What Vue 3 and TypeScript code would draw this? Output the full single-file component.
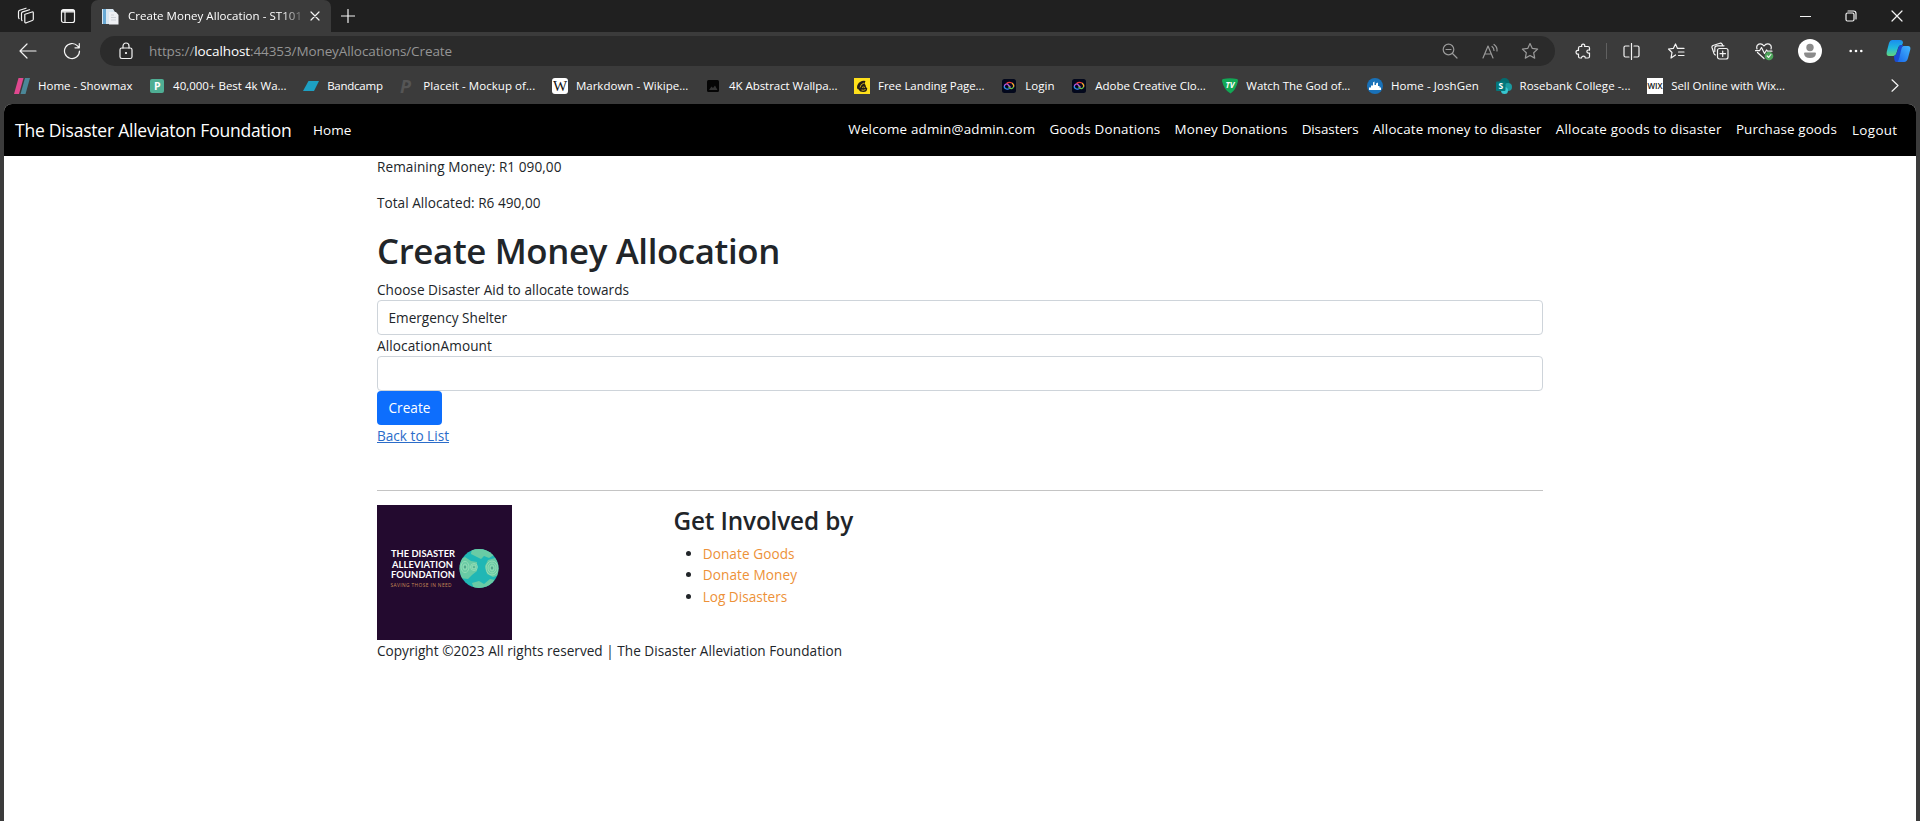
<script setup lang="ts">
import type { Directive } from 'vue'

interface Label {
  text: string
  width: number
}
interface Bookmark extends Label {
  icon: string
}

// Spreads letters so a label fills its intended width whichever font is present.
const vFit: Directive<HTMLElement, number> = {
  mounted(el, { value }) {
    const natural = el.getBoundingClientRect().width
    const count = (el.textContent ?? '').trim().length
    if (count > 0) el.style.letterSpacing = `${(value - natural) / count}px`
  },
}

const bookmarks: Bookmark[] = [
  { icon: 'showmax', text: 'Home - Showmax', width: 94.5 },
  { icon: 'pexels', text: '40,000+ Best 4k Wa...', width: 113.5 },
  { icon: 'bandcamp', text: 'Bandcamp', width: 55.5 },
  { icon: 'placeit', text: 'Placeit - Mockup of...', width: 112 },
  { icon: 'wiki', text: 'Markdown - Wikipe...', width: 112.5 },
  { icon: 'wall', text: '4K Abstract Wallpa...', width: 108.5 },
  { icon: 'chimp', text: 'Free Landing Page...', width: 106.5 },
  { icon: 'adobe', text: 'Login', width: 29.5 },
  { icon: 'adobe', text: 'Adobe Creative Clo...', width: 110.5 },
  { icon: 'tv', text: 'Watch The God of...', width: 104 },
  { icon: 'josh', text: 'Home - JoshGen', width: 88 },
  { icon: 'share', text: 'Rosebank College -...', width: 111 },
  { icon: 'wix', text: 'Sell Online with Wix...', width: 114 },
]

const navLinks: Label[] = [
  { text: 'Welcome admin@admin.com', width: 187 },
  { text: 'Goods Donations', width: 111 },
  { text: 'Money Donations', width: 113 },
  { text: 'Disasters', width: 57 },
  { text: 'Allocate money to disaster', width: 169 },
  { text: 'Allocate goods to disaster', width: 166 },
  { text: 'Purchase goods', width: 101 },
]

const involve: Label[] = [
  { text: 'Donate Goods', width: 92 },
  { text: 'Donate Money', width: 94.5 },
  { text: 'Log Disasters', width: 84.5 },
]
</script>

<template>
  <div class="window">
    <header class="titlebar">
      <span class="cell workspace">
        <svg width="18" height="18" viewBox="0 0 18 18" class="line">
          <path d="M8 7.2 15 5q1.300-.3 1.300 1v6.300q0 .9-1 1.200L9.300 15.800Q7.800 16.200 7.800 15V8.200Q7.500 7.500 8 7.200Z" />
          <path d="M5 13.500Q4.500 13 4.500 12.500V6.500Q4.500 5.300 5.700 4.900L12.500 2.700" />
          <path d="M2 11.500Q1.500 11 1.500 10V4.800Q1.500 3.600 2.700 3.200L9 1.200" />
        </svg>
      </span>
      <span class="cell actions">
        <svg width="16" height="16" viewBox="0 0 16 16" class="line">
          <rect x="1.500" y="1.500" width="13" height="13" rx="2" /><path d="M1.500 4H14.500M5 4V14" /><path d="M2.500 2.700H13.500" stroke-width="2" />
        </svg>
      </span>
      <div class="tab">
        <svg width="17" height="17" viewBox="0 0 17 17">
          <path d="M0 1h11l2 3v12H0z" fill="#d9e6f0" /><path d="M1 1h3v15H1z" fill="#69a9d4" /><path d="M7 4h7l2.500 3v9.500H7z" fill="#eef0f3" />
          <path d="M9 7h3M9 9.500h5M9 12h5" stroke="#cdd2d8" />
        </svg>
        <div class="tab-title"><span v-fit="174" class="fit">Create Money Allocation - ST101</span></div>
        <svg width="10" height="10" viewBox="0 0 10 10" class="line"><path d="m1 1 8 8M9 1 1 9" /></svg>
      </div>
      <span class="cell plus"><svg width="14" height="14" viewBox="0 0 14 14" class="line"><path d="M7 .5V13.500M.5 7H13.500" /></svg></span>
      <div class="controls">
        <span class="cell"><svg width="11" height="11" viewBox="0 0 11 11" class="line"><path d="M.5 5.500H10.500" /></svg></span>
        <span class="cell"><svg width="12" height="12" viewBox="0 0 12 12" class="line"><rect x="1" y="3" width="8" height="8" rx="1.500" /><path d="M3 1H8.500Q11 1 11 3.500V9" /></svg></span>
        <span class="cell"><svg width="12" height="12" viewBox="0 0 12 12" class="line"><path d="m1 1 10 10M11 1 1 11" /></svg></span>
      </div>
    </header>

    <div class="toolbar">
      <span class="cell back"><svg width="18" height="16" viewBox="0 0 18 16" class="line"><path d="M8 1 1 8l7 7M1 8H17" /></svg></span>
      <span class="cell reload"><svg width="18" height="18" viewBox="0 0 18 18" class="line"><path d="M16.500 9A7.500 7.500 0 1 1 14.500 3.900L16 5.500M16.300 1.500V5.800H12" /></svg></span>
      <div class="omnibox">
        <span class="cell lock"><svg width="14" height="18" viewBox="0 0 14 18" class="line"><rect x="1" y="6" width="12" height="10.500" rx="1.800" /><path d="M4 6V4a3 3 0 0 1 6 0V6" /><circle cx="7" cy="11" r=".5" fill="#fff" /></svg></span>
        <span v-fit="303" class="url fit">https://<b>localhost</b>:44353/MoneyAllocations/Create</span>
        <span class="cell dim zoom"><svg width="16" height="16" viewBox="0 0 16 16" class="line"><circle cx="6.500" cy="6.500" r="5.300" /><path d="M10.500 10.500 15 15M4 6.500H9" /></svg></span>
        <span class="cell dim"><svg width="17" height="16" viewBox="0 0 17 16" class="line"><path d="M1 15 6 3l5 12M2.800 11H9.200M10 3.500Q12 5 12 7.500M12 1.500Q15.500 4 15 8" /></svg></span>
        <span class="cell dim"><svg width="18" height="18" viewBox="0 0 18 18" class="line"><path d="m9 1.500 2.300 4.900 5.300.7-3.900 3.700 1 5.300L9 13.500l-4.700 2.600 1-5.300L1.400 7.100l5.300-.7Z" /></svg></span>
      </div>
      <span class="cell puzzle"><svg width="17" height="17" viewBox="0 0 17 17" class="line"><path d="M5 3.500H6.800C5.500 .3 10.800 .3 9.600 3.500H13Q14.500 3.500 14.500 5V7.200C11 6 11 11 14.500 10V13.500Q14.500 15 13 15H10.300C10.300 12.500 6.500 12.500 6.500 15H5Q3.500 15 3.500 13.500V11C.2 12 .2 6.500 3.500 7.500V5Q3.500 3.500 5 3.500Z" /></svg></span>
      <span class="divider"></span>
      <span class="cell split"><svg width="17" height="17" viewBox="0 0 17 17" class="line"><path d="M8.500 .5V16.500M6 3H2.500Q1 3 1 4.500V12.500Q1 14 2.500 14H6M11 3H14.500Q16 3 16 4.500V12.500Q16 14 14.500 14H11" /></svg></span>
      <span class="cell"><svg width="18" height="18" viewBox="0 0 18 18" class="line"><path d="M8.500 13 4 16l1-5.500L1.500 7l4.800-.6L8.500 2l2 4.400H17M11.500 10H17M11.500 13.500H17" /></svg></span>
      <span class="cell"><svg width="18" height="18" viewBox="0 0 18 18" class="line"><rect x="6.500" y="6.500" width="10.500" height="10.500" rx="2" /><path d="M11.700 9v5.500M9 11.700H14.500M4.500 13Q3.500 12.800 3 11.500L1 5.500Q.6 4.200 2 3.500L9 1.200Q10.500 1 11.200 2.300L11.700 3.800M3.800 9.500V6Q3.800 3.800 6 3.800H13" /></svg></span>
      <span class="cell"><svg width="19" height="19" viewBox="0 0 19 19" class="line"><path d="M2 7C.5 2 6 0 9 4c3-4 8.500-2 7 3M2.500 10.500 9 16.500M.5 8.700H4.500L6.500 5.500l3 6L11.500 8l1 1.200H17" /><circle cx="14" cy="14" r="4.300" fill="#4da35a" stroke="none" /><path d="m12.200 14 1.400 1.400 2.300-2.900" /></svg></span>
      <span class="cell avatar"><svg width="24" height="24" viewBox="0 0 24 24"><circle cx="12" cy="12" r="12" fill="#fff" /><circle cx="12" cy="8.500" r="3.700" fill="#8b8b8b" /><path d="M6 14.500Q6 13.500 7 13.500H17Q18 13.500 18 14.500Q17.500 19 12 19T6 14.500Z" fill="#8b8b8b" /></svg></span>
      <span class="cell"><svg width="14" height="4" viewBox="0 0 14 4" fill="#fff"><circle cx="1.700" cy="2" r="1.300" /><circle cx="7" cy="2" r="1.300" /><circle cx="12.300" cy="2" r="1.300" /></svg></span>
      <span class="cell copilot">
        <svg width="25" height="24" viewBox="0 0 25 24">
          <defs>
            <linearGradient id="cpa" x2="0" y2="1"><stop stop-color="#1a8df0" /><stop offset=".5" stop-color="#20b9de" /><stop offset="1" stop-color="#62d67c" /></linearGradient>
            <linearGradient id="cpb" x1="1" x2="0" y2="1"><stop stop-color="#43b8ff" /><stop offset="1" stop-color="#1764ea" /></linearGradient>
          </defs>
          <path d="M6 1H14Q17 1 17 4L16 6Q13 6 12 9L10.500 14Q9.500 17 7 17H3Q0 17 .7 13L3 4Q4 1 6 1Z" fill="url(#cpa)" />
          <path d="M8 17Q10 16.500 11 13L13 7Q14 5.500 16 6H17L12.500 22Q12 23 10 23Q8 22.500 8 17Z" fill="#1b4bd2" />
          <path d="M17.500 7H22Q25 7 24.300 10.500L22 19Q21 23 18 23H10.500Q12 23 13 19.500L15.500 9.500Q16 7 17.500 7Z" fill="url(#cpb)" />
        </svg>
      </span>
    </div>

    <div class="bookmarks">
      <div v-for="b in bookmarks" :key="b.text" class="bookmark">
        <svg width="16" height="16" viewBox="0 0 16 16" class="favicon">
          <template v-if="b.icon === 'showmax'"><path d="M4.500 0H9.500L5 16H0Z" fill="#e0488f" /><path d="M11 0H16L11.500 16H6.500Z" fill="#4b8798" /></template>
          <template v-else-if="b.icon === 'pexels'"><rect x="1" y="1" width="14" height="14" rx="2" fill="#4fae94" /><text x="8.200" y="12" text-anchor="middle" class="glyph pexels">P</text></template>
          <path v-else-if="b.icon === 'bandcamp'" d="M5.500 3H16L11 13H0Z" fill="#1da0c3" />
          <text v-else-if="b.icon === 'placeit'" x="1" y="14.500" class="glyph placeit">P</text>
          <template v-else-if="b.icon === 'wiki'"><rect width="16" height="16" rx="3" fill="#fff" /><text x="8" y="13" text-anchor="middle" textLength="14" class="glyph wiki">W</text></template>
          <template v-else-if="b.icon === 'wall'"><rect x="2" y="2" width="12" height="12" rx="1.500" fill="#050505" /><path d="m4 12 2.500-3.500L8 10l2-2.500 2.500 4.500Z" fill="#353535" /></template>
          <template v-else-if="b.icon === 'chimp'"><rect width="16" height="16" fill="#ffe01b" /><path d="M3 9.500Q3 6 6 4T11.500 3L10.500 5.500Q12 7 12 9l1.300 1.500Q13 14 9.500 14Q5.500 14 4.800 11.500Q3 11.500 3 9.500Z" fill="#241c15" /><path d="M6 9.500Q6.500 6 10 5M8 9.500q1.500-1 3 0M7.500 12q2 .8 4-.5" fill="none" stroke="#ffe01b" stroke-width=".7" /></template>
          <template v-else-if="b.icon === 'adobe'"><rect x="1" y="1" width="14" height="14" rx="2.500" fill="#03081c" /><g fill="none" stroke-width="1.300"><path d="M8.500 10.500Q7 11.500 5.500 11Q3 10.200 3.300 8" stroke="#2f8cf0" /><path d="M3.300 8Q4 5.500 6.500 6L9.500 9.500" stroke="#b957e8" /><path d="M5.500 5.500Q8 3.500 11 5" stroke="#ee3e38" /><path d="M11 5Q13.500 7 12.500 9" stroke="#f2a52e" /><path d="M12.500 9Q11 11.500 8.500 10L7.500 8.500" stroke="#69bf4b" /></g></template>
          <template v-else-if="b.icon === 'tv'"><path d="M1 1Q8-.5 15 1Q16 1 16 3Q14 12 8.500 15.500Q2 12 0 3Q0 1 1 1Z" fill="#12a856" /><text x="8" y="9.500" text-anchor="middle" class="glyph tv">TV</text></template>
          <template v-else-if="b.icon === 'josh'"><circle cx="8" cy="8" r="8" fill="#1971b8" /><path d="M2 12V9.500H4V7.500H6V4.500L7.500 3.500V7H9V5.500L11 4.500V8H12.500V9.500H14V12Z" fill="#fff" /></template>
          <template v-else-if="b.icon === 'share'"><circle cx="8.500" cy="5" r="5" fill="#036c70" /><circle cx="12" cy="9" r="4" fill="#1a9ba1" /><circle cx="8.500" cy="12.500" r="3.500" fill="#37c6d0" /><rect y="3.500" width="9.500" height="9.500" rx="1" fill="#03787c" /><text x="4.800" y="11.200" text-anchor="middle" class="glyph share">S</text></template>
          <template v-else><rect width="16" height="16" fill="#fff" /><text x="8" y="10.800" text-anchor="middle" textLength="15" lengthAdjust="spacingAndGlyphs" class="glyph wix">WIX</text></template>
        </svg>
        <span v-fit="b.width" class="fit">{{ b.text }}</span>
      </div>
      <svg class="line more" width="8" height="13" viewBox="0 0 8 13"><path d="m1 .8 6 5.700-6 5.700" /></svg>
    </div>

    <div class="page">
      <nav class="navbar">
        <a v-fit="276.500" class="brand fit">The Disaster Alleviaton Foundation</a>
        <a v-fit="38.500" class="home fit">Home</a>
        <div class="links">
          <a v-for="l in navLinks" :key="l.text" v-fit="l.width" class="fit">{{ l.text }}</a>
          <a v-fit="45.500" class="logout fit">Logout</a>
        </div>
      </nav>

      <main class="container">
        <p class="total"><span v-fit="184.500" class="fit">Remaining Money: R1 090,00</span></p>
        <p class="total"><span v-fit="163.500" class="fit">Total Allocated: R6 490,00</span></p>
        <h1><span v-fit="403" class="fit">Create Money Allocation</span></h1>
        <form @submit.prevent>
          <label><span v-fit="252" class="fit">Choose Disaster Aid to allocate towards</span></label>
          <div class="field"><span v-fit="118.500" class="fit">Emergency Shelter</span></div>
          <label><span v-fit="115" class="fit">AllocationAmount</span></label>
          <div class="field"></div>
          <button type="submit"><span v-fit="42" class="fit">Create</span></button>
        </form>
        <div class="return"><a v-fit="72" class="fit">Back to List</a></div>

        <footer>
          <div class="columns">
            <svg class="logo" width="135" height="135" viewBox="0 0 135 135">
              <rect width="135" height="135" fill="#230a2f" />
              <g class="logo-name">
                <text x="14" y="52" textLength="64">THE DISASTER</text>
                <text x="15" y="62.500" textLength="61">ALLEVIATION</text>
                <text x="14" y="73" textLength="64">FOUNDATION</text>
              </g>
              <text x="13.500" y="82.300" textLength="61" class="tagline">SAVING THOSE IN NEED</text>
              <clipPath id="globe"><circle cx="102" cy="63.500" r="19.500" /></clipPath>
              <g clip-path="url(#globe)">
                <rect x="82" y="43" width="40" height="41" fill="#20b7b5" />
                <g fill="#69cba5">
                  <path d="M95 43H115L117 50L112 53L107 51L104 54L98 51L94 49Z" />
                  <path d="M82 55L88 52L94 56L100 57V66L95 70L91 74L82 73Z" />
                  <path d="M108 61L111 55L118 53L123 60V70L116 72L110 69Z" />
                  <path d="M95 78L102 76L107 79L113 74L118 75L110 84H97Z" />
                </g>
                <g fill="none" stroke="#a6e4bd" stroke-width=".7">
                  <ellipse cx="88" cy="62" rx="2" ry="3" /><ellipse cx="88" cy="62" rx="4" ry="5.500" />
                  <circle cx="97" cy="62" r="2" /><circle cx="97" cy="62" r="3.500" />
                  <ellipse cx="115" cy="63" rx="2" ry="3" /><ellipse cx="115" cy="63" rx="4" ry="5" /><ellipse cx="115" cy="63" rx="6" ry="7" />
                </g>
                <g fill="#38746c"><circle cx="88" cy="62" r=".8" /><circle cx="97" cy="62" r=".6" /><circle cx="115" cy="63" r=".8" /></g>
              </g>
            </svg>
            <div class="involve">
              <h3><span v-fit="179.500" class="fit">Get Involved by</span></h3>
              <ul>
                <li v-for="i in involve" :key="i.text"><a v-fit="i.width" class="fit">{{ i.text }}</a></li>
              </ul>
            </div>
          </div>
          <div class="copyright"><span v-fit="465" class="fit">Copyright ©2023 All rights reserved | The Disaster Alleviation Foundation</span></div>
        </footer>
      </main>
    </div>
  </div>
</template>

<style>
body { background: #3b3b3b; overflow: hidden; }
</style>

<style scoped>
* { box-sizing: border-box; }
.window { height: 821px; display: flex; flex-direction: column; background: #3b3b3b; color: #fff; font-family: "Open Sans", "Noto Sans", sans-serif; font-size: 11.5px; }
.fit { display: inline-block; width: max-content; flex: none; white-space: nowrap; }
.cell { width: 44px; height: 100%; flex: none; display: flex; align-items: center; justify-content: center; }
.line { fill: none; stroke: #f4f4f4; stroke-width: 1.2; stroke-linecap: round; stroke-linejoin: round; }
svg { flex: none; display: block; }

.titlebar { height: 32px; flex: none; display: flex; background: #202020; }
.workspace { width: 52px; }
.actions { width: 32px; }
.tab { width: 240px; margin-left: 7px; display: flex; align-items: center; padding: 0 11px; background: #3b3b3b; border-radius: 7px 7px 0 0; }
.tab-title { width: 175px; margin: 0 8px 1px 9px; overflow: hidden; mask-image: linear-gradient(90deg, #000 88%, transparent 103%); }
.plus { width: 34px; }
.controls { margin-left: auto; display: flex; }
.controls .cell { width: 46px; }

.toolbar { height: 38px; flex: none; display: flex; align-items: center; }
.back { width: 56px; }
.reload { width: 32px; }
.omnibox { width: 1455px; height: 30px; margin-left: 12px; display: flex; align-items: center; border-radius: 15px; background: #2b2b2b; padding-right: 5px; }
.lock { width: 49px; padding-left: 3px; }
.url { font-size: 13.5px; color: #959595; }
.url b { color: #fff; font-weight: 400; }
.dim .line { stroke: #9a9a9a; }
.omnibox .dim { width: 40px; }
.omnibox .zoom { margin-left: auto; }
.puzzle { margin-left: 6px; }
.divider { width: 1px; height: 16px; margin: 0 2px 0 1px; background: #606060; }
.split { margin-right: 1px; }
.avatar { width: 48px; }
.copilot { width: 40px; }

.bookmarks { height: 34px; flex: none; display: flex; align-items: center; gap: 16.6px; padding: 0 21px 3px 14px; }
.bookmark { display: flex; align-items: center; gap: 8px; }
.favicon { overflow: visible; }
.more { margin-left: auto; }
.glyph { font-weight: 700; }
.pexels { font-size: 10.5px; fill: #fff; }
.placeit { font-size: 18px; font-style: italic; fill: #555; }
.wiki { font: 15px "Liberation Serif", serif; fill: #111; }
.tv { font-size: 8px; font-style: italic; fill: #fff; }
.share { font-size: 8.5px; fill: #fff; }
.wix { font-size: 8px; font-weight: 600; fill: #111; }

.page { flex: 1; margin: 0 4px; overflow: hidden; border-radius: 8px 8px 0 0; background: #fff; color: #212529; font-size: 13.6px; line-height: 21.6px; }
.navbar { height: 52px; display: flex; align-items: center; padding: 1px 18.5px 0 11px; background: #000; color: #fff; }
.brand { font-size: 17.5px; padding-top: 1px; }
.home { margin-left: 21.5px; font-size: 13.5px; }
.links { margin-left: auto; display: flex; gap: 14.1px; font-size: 13.4px; padding-bottom: 1px; }
.logout { padding-top: 1px; margin: 0 0 -1px 1px; }

.container { width: 1166px; margin: 0 auto; }
p { margin: 0 0 14.4px; }
h1 { margin: 0; padding-top: 1px; height: 51px; font-size: 34.8px; line-height: 43.2px; font-weight: 600; }
label { display: block; height: 21px; }
.field { height: 35px; padding: 6px 10.5px; border: 1px solid #ced4da; border-radius: 4px; }
.field + label { line-height: 22px; }
button { display: block; width: 65px; height: 34px; padding: 0; border: 0; border-radius: 4px; background: #0d6efd; color: #fff; font: inherit; }
.return a { color: #2b6cc9; text-decoration: underline; }
.return { line-height: 22px; }
footer { margin-top: 43px; border-top: 1px solid #c4c4c4; padding-top: 14px; }
.columns { display: flex; height: 135px; }
.involve { margin-left: 161.5px; }
h3 { margin: 0; padding-top: 1px; height: 37.6px; font-size: 24.3px; line-height: 30.2px; font-weight: 600; }
ul { margin: 0; padding-left: 29.2px; }
li::marker { color: #212529; }
li a { color: #ed9138; }
.logo-name { font: 700 9.3px Lato, sans-serif; fill: #fff; }
.tagline { font-size: 4.8px; fill: #c98b56; }
</style>
